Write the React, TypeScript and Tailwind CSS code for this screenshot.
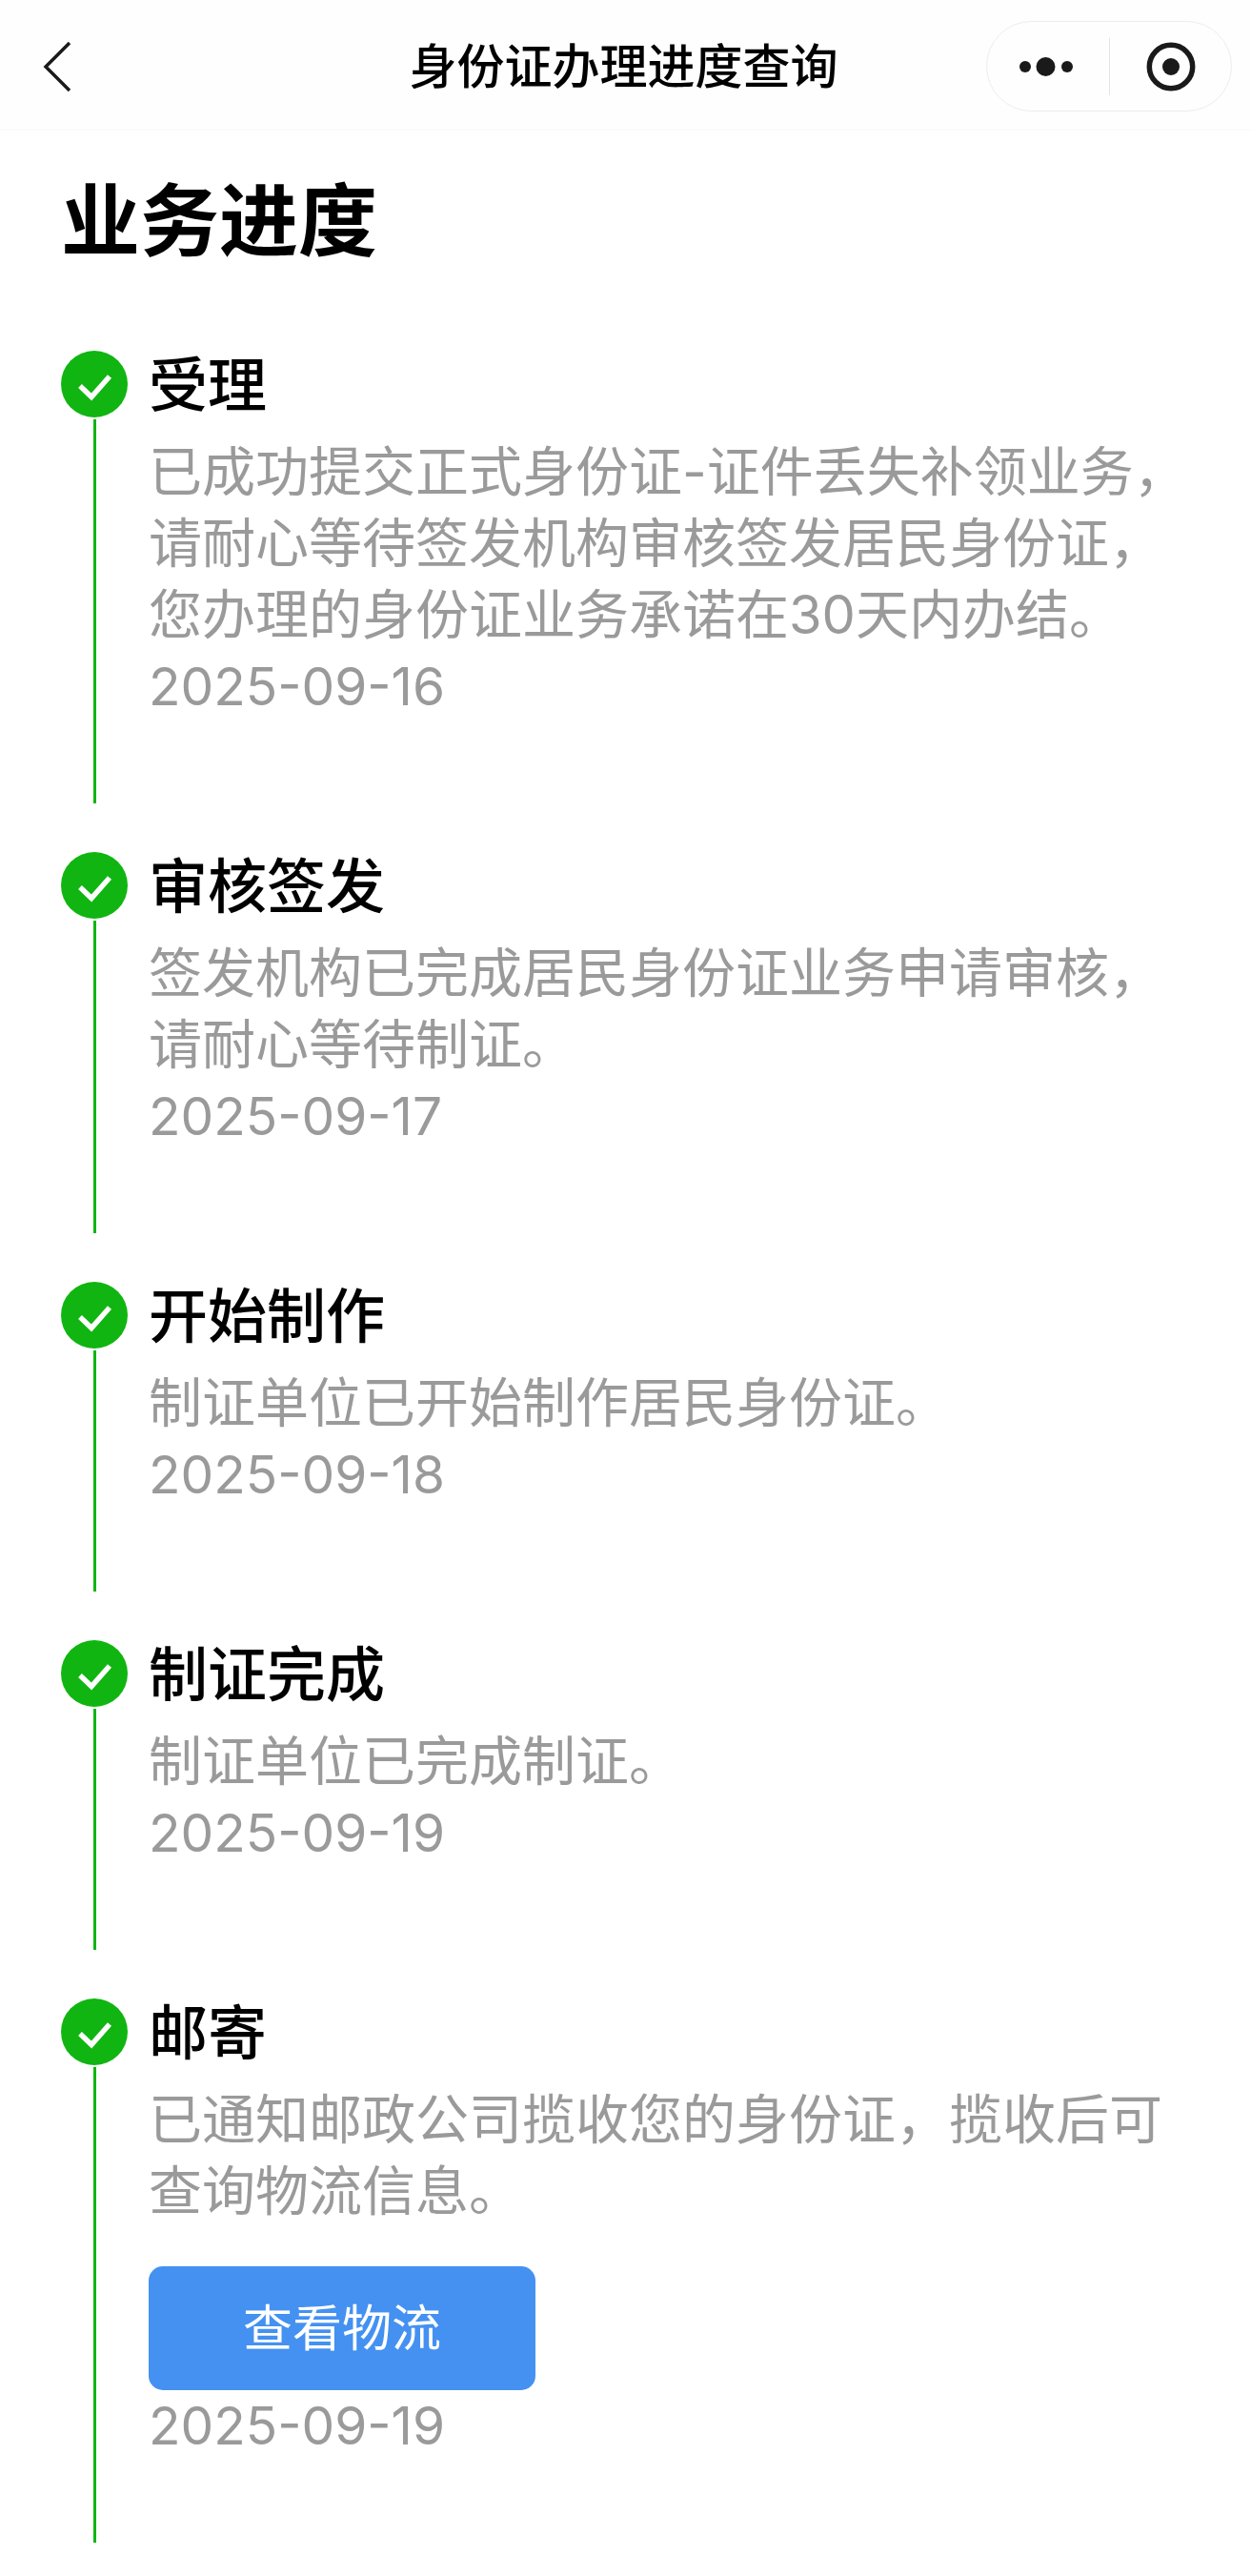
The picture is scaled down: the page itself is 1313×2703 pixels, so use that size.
const steps = [
  {
    title: '受理',
    lines: [
      '已成功提交正式身份证-证件丢失补领业务，',
      '请耐心等待签发机构审核签发居民身份证，',
      '您办理的身份证业务承诺在30天内办结。',
    ],
    date: '2025-09-16',
  },
  {
    title: '审核签发',
    lines: ['签发机构已完成居民身份证业务申请审核，', '请耐心等待制证。'],
    date: '2025-09-17',
  },
  {
    title: '开始制作',
    lines: ['制证单位已开始制作居民身份证。'],
    date: '2025-09-18',
  },
  {
    title: '制证完成',
    lines: ['制证单位已完成制证。'],
    date: '2025-09-19',
  },
  {
    title: '邮寄',
    lines: ['已通知邮政公司揽收您的身份证，揽收后可', '查询物流信息。'],
    date: '2025-09-19',
    action: '查看物流',
  },
]

function CheckBadge() {
  return (
    <svg width="70" height="70" viewBox="0 0 70 70" className="shrink-0">
      <circle cx="35" cy="35" r="35" fill="#10b511" />
      <path d="M20 37 L32 48.5 L51 27" fill="none" stroke="#fff" strokeWidth="5.5" />
    </svg>
  )
}

export default function App() {
  return (
    <div className="min-h-[2703px] bg-white text-black font-['Inter','Noto_Sans_CJK_SC',sans-serif]">
      <header className="grid h-[137px] grid-cols-[1fr_auto_1fr] items-center border-b border-[#f8f8f8] bg-[#fefefe] px-[20px] pt-[3px]">
        <svg width="32" height="54" viewBox="0 0 32 54" className="ml-[24px]">
          <path d="M29 2 L4 27 L29 52" fill="none" stroke="#1a1a1a" strokeWidth="3.5" />
        </svg>
        <h2 className="mr-[4px] text-[50px] leading-[60px] font-medium whitespace-nowrap">身份证办理进度查询</h2>
        <div className="flex h-[95px] w-[258px] items-center justify-self-end rounded-full border border-[#ededed]">
          <div className="flex h-[60px] w-[129px] items-center justify-end border-r border-[#e4e4e4] pr-[36px]">
            <svg width="58" height="24" viewBox="0 0 58 24">
              <circle cx="6" cy="12" r="6" fill="#1a1a1a" />
              <circle cx="27.5" cy="12" r="10" fill="#1a1a1a" />
              <circle cx="50" cy="12" r="6" fill="#1a1a1a" />
            </svg>
          </div>
          <svg width="52" height="52" viewBox="0 0 52 52" className="ml-[38px]">
            <circle cx="26" cy="26" r="22.7" fill="none" stroke="#1a1a1a" strokeWidth="5.5" />
            <circle cx="26" cy="26" r="9" fill="#1a1a1a" />
          </svg>
        </div>
      </header>

      <main className="pl-[64px] pt-[45px]">
        <h1 className="text-[83px] leading-[100px] font-bold">业务进度</h1>

        <div className="mt-[86px] flex flex-col gap-[51px]">
          {steps.map((step) => (
            <section key={step.title} className="flex gap-[22px]">
              <div className="flex w-[70px] shrink-0 flex-col items-center">
                <CheckBadge />
                <div className="mt-0.5 w-[3px] flex-1 bg-[#10b511]" />
              </div>
              <div className="pb-[85px]">
                <h3 className="text-[62px] leading-[74px] font-medium">{step.title}</h3>
                <div className="mt-[16px] text-[56px] leading-[75px] text-[#9a9a9a]">
                  {step.lines.map((line) => (
                    <p key={line} className="whitespace-nowrap">
                      {line}
                    </p>
                  ))}
                  {step.action ? (
                    <button
                      type="button"
                      className="mt-[41px] flex h-[130px] w-[406px] items-center justify-center rounded-[15px] bg-[#4491f1] text-[52px] text-white"
                    >
                      {step.action}
                    </button>
                  ) : null}
                  <p className="text-[55px]">{step.date}</p>
                </div>
              </div>
            </section>
          ))}
        </div>
      </main>
    </div>
  )
}
